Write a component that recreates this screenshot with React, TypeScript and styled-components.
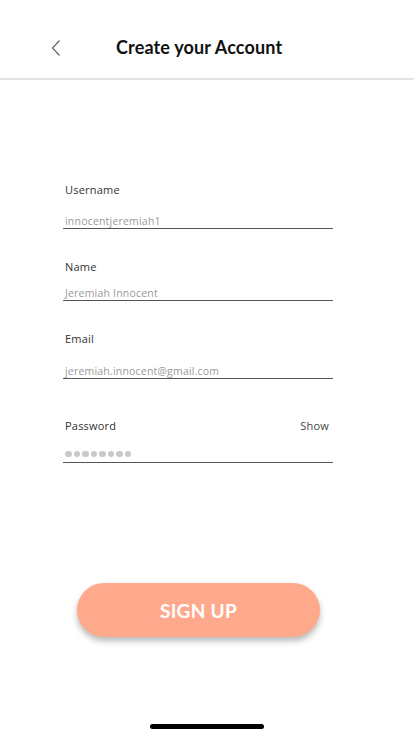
import { FC } from "react";
import styled, { createGlobalStyle } from "styled-components";

const GlobalStyle = createGlobalStyle`
  body {
    margin: 0;
    background: #ffffff;
    font-family: "Open Sans", "Noto Sans", sans-serif;
  }
`;

type FieldProps = {
  label: string;
  value?: string;
  top: number;
  gap: number;
  action?: string;
  secret?: boolean;
};

const Field: FC<FieldProps> = ({ label, value, top, gap, action, secret }) => {
  return (
    <SField $top={top}>
      <SLabelRow $gap={gap}>
        <SLabel>{label}</SLabel>
        {action && <SAction>{action}</SAction>}
      </SLabelRow>
      <SInputLine>
        {secret ? (
          <SDots>
            {Array.from({ length: 8 }).map((_, i) => (
              <SDot key={i} />
            ))}
          </SDots>
        ) : (
          <SValue>{value}</SValue>
        )}
      </SInputLine>
    </SField>
  );
};

const App: FC = () => {
  return (
    <SPage>
      <GlobalStyle />
      <SHeader>
        <SBack aria-label="Back">
          <svg width="10" height="18" viewBox="0 0 10 18">
            <path d="M8.5 1.5 L1.5 9 L8.5 16.5" fill="none" stroke="#666" strokeWidth="1.2" />
          </svg>
        </SBack>
        <STitle>Create your Account</STitle>
      </SHeader>
      <SForm>
        <Field label="Username" value="innocentjeremiah1" top={0} gap={16} />
        <Field label="Name" value="Jeremiah Innocent" top={30} gap={11} />
        <Field label="Email" value="jeremiah.innocent@gmail.com" top={30} gap={17} />
        <Field label="Password" action="Show" top={39} gap={14} secret />
      </SForm>
      <SButton>SIGN UP</SButton>
      <SHomeBar />
    </SPage>
  );
};

export default App;

const SPage = styled.div`
  width: 414px;
  height: 736px;
  display: flex;
  flex-direction: column;
  background: #ffffff;
  overflow: hidden;
`;

const SHeader = styled.header`
  height: 62px;
  padding-top: 16px;
  display: flex;
  align-items: center;
  gap: 55px;
  padding-left: 51px;
  border-bottom: 2px solid #e3e3e3;
  box-sizing: content-box;
`;

const SBack = styled.button`
  border: none;
  background: none;
  padding: 0;
  width: 10px;
  height: 18px;
  display: flex;
  margin-top: 2px;
`;

const STitle = styled.h1`
  margin: 0;
  font-family: "Lato", "Open Sans", sans-serif;
  font-weight: 700;
  font-size: 18px;
  color: #111111;
  letter-spacing: 0.15px;
`;

const SForm = styled.form`
  display: flex;
  flex-direction: column;
  margin: 102px 81px 0 63px;
`;

const SField = styled.div<{ $top: number }>`
  display: flex;
  flex-direction: column;
  margin-top: ${(p) => p.$top}px;
`;

const SLabelRow = styled.div<{ $gap: number }>`
  display: flex;
  justify-content: space-between;
  align-items: center;
  height: 14px;
  padding: 0 4px 0 2px;
  margin-bottom: ${(p) => p.$gap}px;
`;

const SLabel = styled.label`
  font-size: 11px;
  color: #333333;
  letter-spacing: 0.2px;
`;

const SAction = styled.span`
  font-size: 11px;
  color: #444444;
  letter-spacing: 0.2px;
`;

const SInputLine = styled.div`
  height: 16px;
  display: flex;
  align-items: center;
  padding-left: 2px;
  border-bottom: 1px solid #555555;
`;

const SValue = styled.span`
  font-size: 10.5px;
  color: #9a9a9a;
  letter-spacing: 0.2px;
  line-height: 16px;
  padding-top: 2px;
`;

const SDots = styled.div`
  display: flex;
  gap: 2px;
`;

const SDot = styled.span`
  width: 6.5px;
  height: 6.5px;
  border-radius: 50%;
  background: #c9c9c9;
`;

const SButton = styled.button`
  margin: 120px 0 0 77px;
  width: 243px;
  height: 54px;
  border: none;
  border-radius: 27px;
  background: #ffa98c;
  color: #ffffff;
  font-family: "Lato", "Open Sans", sans-serif;
  font-weight: 700;
  font-size: 19px;
  letter-spacing: 0.3px;
  box-shadow: 0 4px 6px rgba(0, 0, 0, 0.28);
`;

const SHomeBar = styled.div`
  margin: 87px auto 0;
  width: 114px;
  height: 5px;
  border-radius: 3px;
  background: #000000;
`;
